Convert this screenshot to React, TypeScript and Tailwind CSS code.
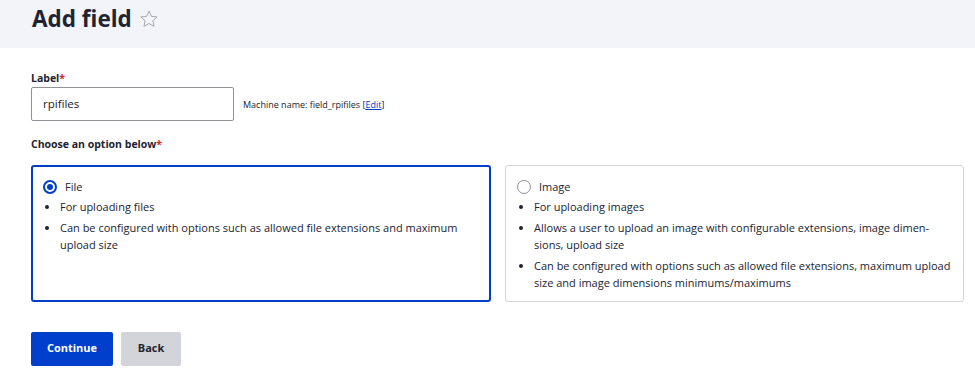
import React from 'react';

const font = { fontFamily: '"Open Sans", "Noto Sans", sans-serif' };

const Star = () => (
  <svg width="20" height="20" viewBox="0 0 24 24" fill="none" stroke="#a8a9ae" strokeWidth="1.2" strokeLinejoin="round">
    <path d="M12 2.5l2.9 6.3 6.8.7-5.1 4.6 1.5 6.7L12 17.4l-6.1 3.4 1.5-6.7-5.1-4.6 6.8-.7z" />
  </svg>
);

const Option = ({ checked, title, items }: { checked: boolean; title: string; items: string[] }) => (
  <div
    className={`flex-1 rounded-[3px] bg-white px-[10px] pt-[12px] pb-3 ${
      checked ? 'border-2 border-[#003ecc]' : 'border border-[#d3d4d9] pl-[11px] pt-[13px]'
    }`}
  >
    <div className="flex items-center gap-[8px]">
      {checked ? (
        <span className="flex h-[14px] w-[14px] items-center justify-center rounded-full border-2 border-[#003ecc]">
          <span className="h-[6px] w-[6px] rounded-full bg-[#003ecc]" />
        </span>
      ) : (
        <span className="h-[14px] w-[14px] rounded-full border border-[#8e929c]" />
      )}
      <span className="text-[11px] text-[#222330]">{title}</span>
    </div>
    <ul className="mt-[3px] list-disc pl-[17px] text-[11px] leading-[17px] text-[#222330]" style={{ hyphens: 'manual' }}>
      {items.map((t) => (
        <li key={t} className="mb-[4px]">{t}</li>
      ))}
    </ul>
  </div>
);

const App: React.FC = () => {
  return (
    <div className="min-h-screen bg-white" style={font}>
      <div className="h-[48px] bg-[#f3f4f9] px-[32px] pt-[3px]">
        <div className="flex items-center gap-[7px]">
          <h1 className="text-[22.5px] font-bold leading-[32px] text-[#222330]">Add field</h1>
          <Star />
        </div>
      </div>

      <div className="pl-[31px] pr-[11px]">
        <div className="mt-[23px] text-[10.5px] font-bold text-[#222330]">
          Label<span className="text-[#d72222]">*</span>
        </div>
        <div className="flex items-center gap-[9px]">
          <div className="flex h-[34px] w-[203px] items-center rounded-[2px] border border-[#919297] px-[11px] text-[11.5px] text-[#222330]">
            rpifiles
          </div>
          <div className="mt-[2px] text-[9px] text-[#222330]">
            Machine name: field_rpifiles [<a href="#" className="text-[#003ecc] underline">Edit</a>]
          </div>
        </div>

        <div className="mt-[16px] text-[10.5px] font-bold text-[#222330]">
          Choose an option below<span className="text-[#d72222]">*</span>
        </div>

        <div className="mt-[12px] flex h-[137px] gap-[14px]">
          <Option
            checked
            title="File"
            items={['For uploading files', 'Can be configured with options such as allowed file extensions and maximum upload size']}
          />
          <Option
            checked={false}
            title="Image"
            items={[
              'For uploading images',
              'Allows a user to upload an image with configurable extensions, image dimen\u00ADsions, upload size',
              'Can be configured with options such as allowed file extensions, maximum upload size and image dimensions minimums/maximums',
            ]}
          />
        </div>

        <div className="mt-[30px] flex gap-[8px]">
          <button className="h-[34px] w-[82px] rounded-[2px] bg-[#003ecc] text-[11px] font-bold text-white">Continue</button>
          <button className="h-[34px] w-[60px] rounded-[2px] bg-[#d3d4d9] text-[11px] font-bold text-[#222330]">Back</button>
        </div>
      </div>
    </div>
  );
};

export default App;
